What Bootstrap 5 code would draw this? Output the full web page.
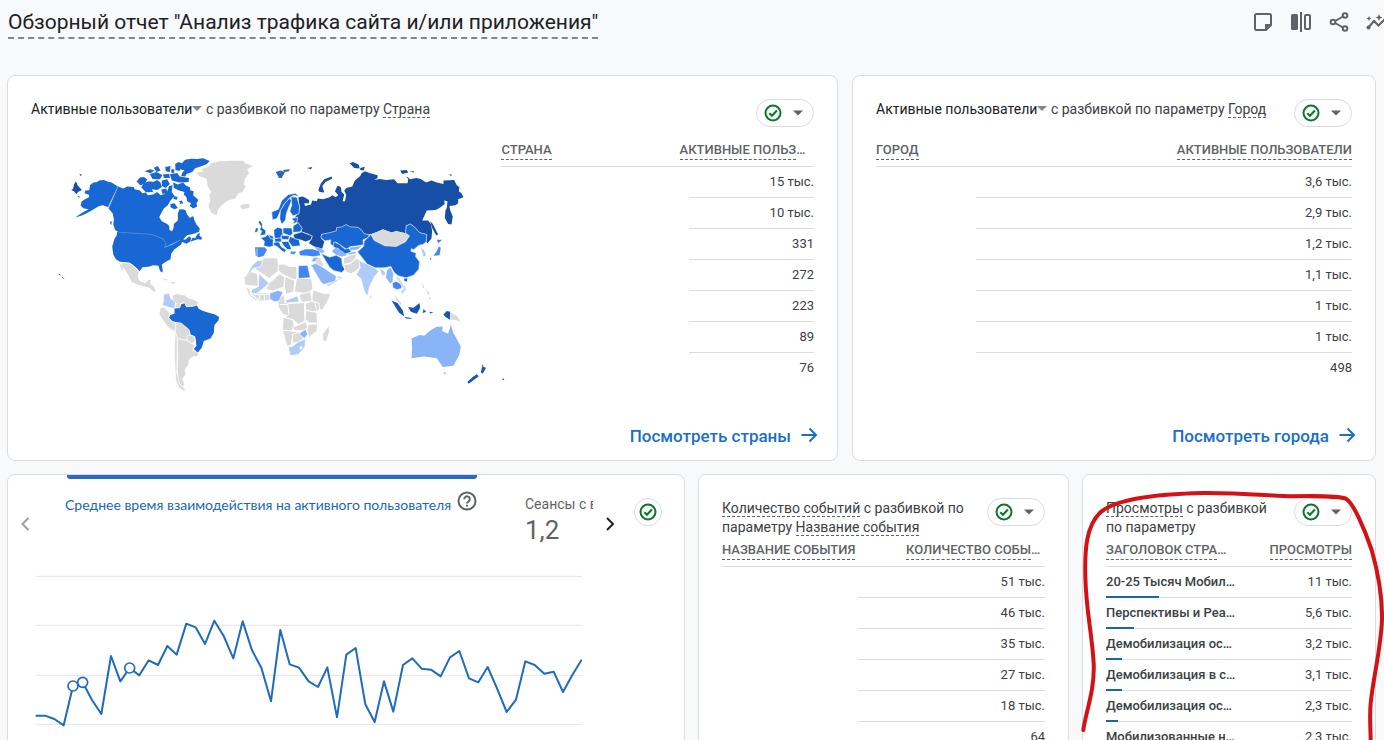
<!DOCTYPE html>
<html lang="ru">
<head>
<meta charset="utf-8">
<meta name="viewport" content="width=device-width, initial-scale=1">
<title>Обзорный отчет</title>
<link href="https://cdn.jsdelivr.net/npm/bootstrap@5.3.0/dist/css/bootstrap.min.css" rel="stylesheet">
<style>
body{background:#f8f9fb;color:#3c4043;font-family:Roboto,"Liberation Sans",sans-serif;font-size:14px;line-height:19px}
.page{padding:0 8px 14px 7px}
.report-head{height:75px;padding-top:10px}
.report-title{font-size:21px;line-height:25px;font-weight:400;color:#202124;border-bottom:2px dashed #80868b;margin-left:1px;padding-bottom:2px}
.tools{gap:14px;margin-right:-13px}
.tool{width:24px;height:24px;padding:0;border:0;background:none;color:#5f6368}
.grid-top,.grid-bottom{display:grid}
.grid-top{grid-template-columns:831fr 524fr;gap:14px;margin-bottom:13px}
.grid-bottom{grid-template-columns:678fr 371fr 294fr;gap:13px}
.panel{background:#fff;border:1px solid #dadce0;border-radius:8px;min-width:0}
.panel-in{padding:23px 23px 0}
.panel-head{min-height:38px;gap:12px}
.panel-title{font-size:14px;line-height:19px;font-weight:400;color:#3c4043;margin:0;padding-top:1px}
.metric{color:#202124;cursor:pointer}
.metric::after{content:"";display:inline-block;border:5px solid transparent;border-top-color:#80868b;border-bottom:0;vertical-align:3px}
.dim{border-bottom:1px dashed #5f6368}
.pill{width:58px;height:28px;border:1px solid #dadce0;border-radius:14px;background:#fff;padding:0 10px 0 6px;flex:none}
.pill svg{display:block}
.badge-round{width:28px;height:28px;border:1px solid #dadce0;border-radius:14px;background:#fff;padding:0;margin:23px 22px 0 7px}
.data{width:100%;table-layout:fixed;border-collapse:separate;border-spacing:0;font-size:13px}
.data th{line-height:16px;font-weight:500;color:#5f6368;padding:4px 0 6px;border-bottom:1px solid #dadce0;white-space:nowrap}
.data th span{display:inline-block;border-bottom:1px dashed #5f6368;padding-bottom:1px}
.panel-head + .data,.country-col .data{border-top:1px solid transparent}
.data td{height:31px;padding:0;line-height:16px;white-space:nowrap;position:relative}
.data td.val{text-align:right;border-bottom:1px solid #dadce0}
.data tr:last-child td.val{border-bottom-color:transparent}
.data td.page-name{font-weight:500;border-bottom:1px solid #dadce0}
.share{position:absolute;left:0;bottom:-1px;height:2px;background:#1967a8}
.map-col{flex:471 1 0;min-width:0}
.country-col{flex:313 1 0;min-width:0}
.panel-foot{padding:0 18px 12px;text-align:right}
.more{display:inline-flex;align-items:center;gap:8px;font-size:17px;line-height:24px;font-weight:500;color:#1a6fc9;text-decoration:none}
.tabs-row{height:96px}
.arrow{border:0;background:none;padding:0;width:34px}
.tabs-view{flex:1;min-width:0;overflow:hidden;margin-left:23px}
.tab{border:0;background:none;padding:20px 0 0;text-align:left;white-space:nowrap;color:#5f6368;line-height:19px;flex:none}
.tab.on{color:#1a67b8;width:412px;position:relative;margin-right:48px;padding-top:16px}
.tab.on::before{content:"";position:absolute;left:2px;right:0;top:0;height:4px;background:#2a6bbf;border-radius:0 0 3px 3px}
.tab-name{font-family:Lato,Roboto,sans-serif;padding-top:4px}
.tab-num{font-size:26px;line-height:32px}
.trend{padding:0 102px 0 27px}
.pen{position:absolute;left:-13px;top:-5px;pointer-events:none}
</style>
</head>
<body>
<svg width="0" height="0" class="position-absolute" aria-hidden="true">
<defs>
<symbol id="ok" viewBox="0 0 20 20"><circle cx="10" cy="10" r="7.5" fill="#f1faf3" stroke="#137333" stroke-width="2"/><path d="M6.3 10.2l2.6 2.6 5-5.3" fill="none" stroke="#137333" stroke-width="2"/></symbol>
<symbol id="down" viewBox="0 0 10 6"><path d="M0 .5h10l-5 5z" fill="#5f6368"/></symbol>
<symbol id="go" viewBox="0 0 20 20"><path d="M2.500 9h14M10.500 2.500L17 9l-6.500 6.500" fill="none" stroke="#1a6fc9" stroke-width="2"/></symbol>
</defs>
</svg>
<div class="page vh-100 overflow-hidden">
<header class="report-head d-flex justify-content-between align-items-start">
<h1 class="report-title mb-0">Обзорный отчет "Анализ трафика сайта и/или приложения"</h1>
<div class="tools d-flex flex-shrink-0">
<button class="tool" aria-label="Заметка"><svg width="24" height="24" viewBox="0 0 24 24" fill="none" stroke="currentColor" stroke-width="2"><path d="M15 20H5.500A1.500 1.500 0 0 1 4 18.500V5.500A1.500 1.500 0 0 1 5.500 4h13A1.500 1.500 0 0 1 20 5.500V15z"/><path d="M14 20v-6h6z" fill="currentColor" stroke="none"/></svg></button>
<button class="tool" aria-label="Сравнить"><svg width="24" height="24" viewBox="0 0 24 24"><rect x="2" y="4" width="7" height="16" rx="1.500" fill="currentColor"/><path d="M12 2v20" stroke="currentColor" stroke-width="2"/><rect x="16" y="5" width="5" height="14" rx="1" fill="none" stroke="currentColor" stroke-width="2"/></svg></button>
<button class="tool" aria-label="Поделиться"><svg width="24" height="24" viewBox="0 0 24 24" fill="none" stroke="currentColor" stroke-width="2"><path d="M8 11l9-5M8 13l9 5"/><circle cx="6" cy="12" r="2.300"/><circle cx="18" cy="5.500" r="2.300"/><circle cx="18" cy="18.500" r="2.300"/></svg></button>
<button class="tool" aria-label="Статистика"><svg width="24" height="24" viewBox="0 0 24 24"><path d="M3 18l6-7 4.500 4.500L22 7" fill="none" stroke="currentColor" stroke-width="2"/><circle cx="3.500" cy="17.500" r="2" fill="currentColor"/><circle cx="9" cy="11.500" r="1.500" fill="currentColor"/><path d="M14 4l1 2.500 2.500 1-2.500 1-1 2.500-1-2.500-2.500-1 2.500-1zM4 6l.8 1.700 1.700.8-1.700.8L4 11l-.8-1.700-1.700-.8 1.700-.8z" fill="currentColor"/></svg></button>
</div>
</header>

<div class="grid-top">
<section class="panel d-flex flex-column">
<div class="panel-in position-relative">
<div class="panel-head d-flex justify-content-between align-items-start">
<h2 class="panel-title"><span class="metric">Активные пользователи</span> с разбивкой по параметру <span class="dim">Страна</span></h2>
<button class="pill d-flex align-items-center justify-content-between" aria-label="Качество данных"><svg width="20" height="20"><use href="#ok"/></svg><svg width="10" height="6"><use href="#down"/></svg></button>
</div>
<div class="d-flex align-items-start">
<div class="map-col">
<svg class="w-100 d-block" viewBox="31 137 471 262" role="img" aria-label="Карта мира">
<g transform="translate(40 140) scale(.33333)" stroke-linejoin="round">
<g fill="#1967d2">
<path d="M150 136L160 128L170 127L178 122L192 120L202 125L215 128L234 140L204 202L190 196L178 198L165 206L150 215L128 226L105 233L128 218L146 208L130 205L122 197L125 185L135 178L147 172L148 165L134 160L136 152L148 151Z"/>
<path d="M235 140L250 146L262 140L282 141L284 148L300 152L308 160L318 158L324 166L340 164L352 156L362 166L374 162L382 154L388 138L398 136L396 156L404 168L392 182L384 196L372 206L366 216L358 232L366 244L382 252L388 258L389 270L396 274L401 266L402 252L414 242L414 222L418 209L430 208L438 212L441 222L450 234L460 228L464 242L470 254L480 266L478 276L462 282L442 286L430 298L436 300L448 290L454 294L452 304L440 312L431 308L418 302L372 324L378 312L370 298L352 290L330 284L238 278L226 270L220 254L222 238L218 220L206 206Z"/>
<path d="M232 276L330 283L352 289L370 298L379 310L374 323L398 314L416 303L428 302L424 314L404 328L394 342L392 358L378 366L366 374L369 394L365 398L360 392L356 378L340 376L326 381L308 382L299 394L292 386L278 374L268 368L240 366L228 358L220 344L217 320L224 296L230 288Z"/>
<path d="M452 306L458 294L466 295L472 284L480 278L479 288L487 294L484 300L474 298L462 302Z"/>
<path d="M406 72L416 66L426 70L436 59L454 56L472 57L490 55L510 63L500 73L480 80L466 85L457 96L440 102L436 110L424 108L428 98L434 92L422 88L418 93L407 90Z"/>
<path d="M400 128L414 134L430 128L438 137L450 142L452 152L462 154L460 166L476 180L470 190L472 200L460 206L450 198L454 190L442 184L440 172L432 164L434 156L418 152L402 144Z"/>
<path d="M304 142L312 130L328 124L340 126L352 120L362 128L366 142L352 150L336 148L340 156L318 157Z"/>
<path d="M290 125L300 113L312 111L322 118L316 130L302 137Z"/>
<path d="M366 122L382 118L390 132L378 144L366 138ZM390 103L412 99L420 110L448 114L446 126L420 128L396 122ZM330 102L350 96L368 106L360 118L338 117ZM314 94L330 88L344 92L332 100ZM342 83L354 78L362 92L350 96ZM376 81L392 78L390 96L378 94ZM394 89L404 88L402 100L394 98ZM370 103L388 102L390 114L372 114ZM364 149L380 146L382 159L368 162ZM392 192L404 190L414 204L404 208L392 202ZM210 246L216 244L214 256ZM418 184L426 182L430 190L422 192ZM404 168L414 172L410 180L400 176Z"/>
<path d="M404 506L420 504L424 494L434 490L440 502L462 498L470 494L476 506L486 512L504 518L526 524L538 532L536 542L524 556L522 580L512 596L492 604L486 624L474 638L462 628L470 618L468 602L466 590L452 584L448 572L436 562L416 550L396 544L387 534L392 526L404 522Z"/>
</g>
<path d="M234 140L204 202" stroke="#5f92e0" stroke-width="2"/>
<path d="M236 277L330 283L352 289L370 298L379 310L374 323L418 303" fill="none" stroke="#5f92e0" stroke-width="2"/>
<path d="M94 150L100 146L102 134L108 124L113 136L118 142L126 150L114 156L109 163L103 155ZM118 103l7 0-2 6zM112 168l7 2-1 4z" fill="#174ea6"/>
<g fill="#dadada">
<path d="M470 98L492 94L484 88L506 80L514 70L540 64L572 62L610 62L616 70L640 78L622 88L628 100L616 116L612 132L618 140L608 156L596 160L586 176L564 182L548 194L536 206L530 226L514 218L506 198L512 180L508 166L514 156L504 138L500 116L478 108Z"/>
<path d="M600 198L612 192L630 194L628 204L608 208Z"/>
<path d="M236 366L246 392L250 393L244 370L266 370L284 382L296 396L294 412L300 424L316 430L326 420L334 422L330 432L342 440L348 456L340 454L328 444L314 440L292 434L274 424L268 410L258 394Z"/>
<path d="M398 466L412 462L434 466L444 474L464 480L476 488L472 496L458 500L440 500L434 488L422 492L420 504L404 504L410 490L398 482Z" stroke="#fff" stroke-width="2"/>
<path d="M362 502L374 504L390 520L386 534L398 546L406 548L410 570L402 574L384 562L368 540L358 524Z" stroke="#fff" stroke-width="2"/>
<path d="M408 548L424 550L448 570L452 588L444 592L438 602L412 596L406 574Z" stroke="#fff" stroke-width="2"/>
<path d="M444 586L460 588L468 604L456 612L440 600Z" stroke="#fff" stroke-width="2"/>
<path d="M412 596L440 602L460 614L466 616L460 630L464 648L448 660L446 676L436 688L438 704L428 718L434 734L430 742L416 728L412 690L414 650Z" stroke="#fff" stroke-width="2"/>
<path d="M406 576L412 594L412 650L411 700L420 734L436 748L434 756L418 744L408 722L406 690L404 640Z" stroke="#fff" stroke-width="2"/>
<path d="M462 632L476 642L470 650L458 648Z"/>
<path d="M362 414L384 420L378 422ZM394 426L406 428L404 432L394 430Z"/>
</g>
<path d="M372 464L388 460L392 476L406 486L404 506L386 502L368 496L372 482Z" fill="#aecbfa" stroke="#fff" stroke-width="1"/>
<path d="M56 403L62 406M66 411L72 417" stroke="#5f6b80" stroke-width="3"/>
</g>
<g transform="translate(230 140) scale(.33333)" stroke-linejoin="round">
<g fill="#174ea6">
<path d="M206 172L220 170L238 180L238 190L224 190L226 198L244 194L248 182L262 184L264 176L280 178L300 172L308 166L318 172L326 166L316 154L324 137L334 142L336 156L344 164L339 184L346 184L350 166L344 152L350 144L368 140L376 122L392 108L396 100L406 94L422 100L444 106L444 114L434 120L450 117L470 120L494 118L504 130L534 130L536 118L530 108L542 118L560 114L574 117L590 128L606 122L622 128L642 132L642 122L674 120L682 136L690 142L688 154L696 160L702 172L686 178L686 190L678 196L660 198L662 210L670 230L666 254L656 252L646 234L648 212L652 204L654 184L644 182L646 192L630 204L618 210L592 212L578 242L596 242L604 252L608 272L606 296L594 310L590 306L592 284L570 278L556 262L545 253L530 256L528 280L500 273L486 278L460 268L444 276L420 284L404 282L396 270L384 262L360 262L350 254L336 262L322 264L320 274L298 280L276 283L274 295L284 305L278 326L254 320L238 310L248 292L236 282L216 276L214 264L202 252L202 240L196 232L204 222L210 206Z"/>
<path d="M266 150L274 130L284 118L306 110L308 116L288 126L278 138L284 158L270 156ZM360 70L370 66L388 74L390 86L374 84ZM392 84L406 80L402 92L392 90ZM512 92L532 90L536 98L518 102ZM540 94L554 94L552 98ZM232 84L248 81L244 88ZM602 244L610 252L626 284L620 286L608 264ZM658 104l8 0 0 5z"/>
</g>
<g stroke="#cfe0fb" stroke-width="2" fill="#1967d2">
<path d="M276 283L298 279L320 273L321 263L336 261L350 254L362 261L384 262L396 270L404 282L420 284L414 294L400 300L402 314L386 318L366 320L350 328L336 318L318 306L314 320L302 312L304 300L286 303L274 294Z"/>
<path d="M404 304L424 284L434 302L466 318L500 320L528 306L540 288L528 280L530 258L542 252L556 262L570 278L592 284L590 306L580 314L568 316L552 330L546 326L544 334L560 340L558 350L570 366L568 388L552 406L530 414L506 408L494 398L484 380L464 384L436 384L414 374L398 354L384 336L402 320Z"/>
<path d="M276 342L286 346L300 352L320 346L336 356L338 376L346 388L336 398L312 392L300 382L290 366Z"/>
<path d="M312 306L330 314L346 328L356 326L368 332L358 340L344 342L326 326L312 322Z"/>
</g>
<path d="M524 416l10 0-3 10-7-3z" fill="#1967d2"/>
<path d="M424 284L444 276L460 269L486 278L500 274L528 280L540 290L526 304L500 320L466 317L436 302Z" fill="#dadada"/>
<g stroke="#fff" stroke-width="2" fill="#1967d2">
<path d="M126 216L146 208L156 182L176 164L198 160L208 170L192 166L178 176L162 196L152 214L142 236L128 240Z"/>
<path d="M150 236L152 212L164 192L180 174L186 182L176 206L170 222L168 240L156 254Z"/>
<path d="M184 170L202 172L210 200L208 222L190 228L180 214L186 196Z"/>
<path d="M90 240L98 252L98 264L108 272L108 284L90 288L96 274L90 268L94 260L86 248ZM78 264L86 264L84 276L74 278Z"/>
<path d="M92 294L108 290L114 284L132 294L130 312L132 318L118 322L102 318L104 304Z"/>
<path d="M132 270L144 262L158 266L160 286L148 298L134 294Z"/>
<path d="M160 264L186 264L190 280L182 288L160 280Z"/>
<path d="M190 258L206 248L218 266L212 276L190 278Z"/>
<path d="M184 236L204 232L202 248L186 252L194 244Z"/>
<path d="M116 284L132 290L130 298L122 296ZM134 296L154 294L156 306L136 308ZM154 286L180 288L176 300L156 298ZM180 290L208 298L212 318L188 320L176 304Z"/>
<path d="M132 308L148 306L154 320L170 330L166 338L158 334L142 320L132 316ZM154 306L176 304L186 328L174 330L162 318Z"/>
</g>
<path d="M190 284L216 276L248 288L244 300L228 306L218 302L210 300L194 296Z" fill="#174ea6" stroke="#fff" stroke-width="2"/>
<path d="M138 96L152 92L166 96L156 114L148 114ZM160 90l20-2-2 6-14 2z" fill="#2f67c0"/>
<path d="M76 322L104 322L112 330L102 348L88 352L78 348Z" fill="#4285f4"/>
<path d="M82 326v24" stroke="#fff" stroke-width="2"/>
<path d="M184 334L200 336L194 344L182 342Z" fill="#5a92ee"/>
<path d="M208 336L226 328L250 328L268 334L272 346L252 350L236 348L212 346Z" fill="#4285f4"/>
<path d="M254 320L276 326L286 336L276 340L264 332Z" fill="#8ab4f8"/>
<path d="M306 334L318 324L340 334L352 346L336 350L318 344Z" fill="#8ab4f8"/>
<path d="M358 322L398 318L384 330L362 332ZM354 340L378 334L380 344L358 346Z" fill="#8ab4f8" stroke="#fff" stroke-width="2"/>
<g fill="#dadada" stroke="#fff" stroke-width="3">
<path d="M342 354L366 344L384 342L376 358L362 370L342 374Z"/>
<path d="M342 374L362 372L380 356L394 360L390 384L376 396L364 402L348 396Z"/>
<path d="M252 352L270 352L284 376L276 382L258 370Z"/>
<path d="M288 434L326 416L334 420L318 428L296 442ZM320 408L338 410L334 424L322 420Z"/>
<path d="M84 364L104 354L144 354L148 392L118 416L76 388Z"/>
<path d="M146 374L162 372L180 380L202 380L202 420L192 420L156 402L146 392Z"/>
<path d="M42 412L60 394L84 402L86 440L46 436Z"/>
<path d="M118 430L150 402L166 412L162 442L128 454L108 448Z"/>
<path d="M166 410L196 422L192 456L168 464L164 440Z"/>
<path d="M200 416L246 416L250 448L230 462L194 456Z"/>
<path d="M250 450L286 462L304 460L296 482L278 512L268 508L246 480Z"/>
<path d="M208 464L242 456L248 484L216 488Z"/>
<path d="M48 442L60 446L62 460L86 480L78 484L56 464ZM60 462L90 458L118 460L122 482L90 484Z"/>
<path d="M144 478L164 464L166 488L210 488L208 506L176 530L160 524L146 502Z"/>
<path d="M174 492L224 488L226 544L206 554L190 540L164 536L178 522Z"/>
<path d="M226 492L246 484L268 490L270 512L244 516L228 510Z"/>
<path d="M228 512L262 518L264 550L240 550L226 538Z"/>
<path d="M160 532L190 540L194 560L186 574L158 572Z"/>
<path d="M190 562L228 546L236 566L214 574L192 574Z"/>
<path d="M236 554L264 552L262 574L238 594L232 570Z"/>
<path d="M158 572L212 576L188 596L184 618L172 620Z"/>
<path d="M188 584L208 578L224 594L206 608L188 610Z"/>
<path d="M298 556L300 576L290 606L280 604L278 584Z"/>
</g>
<path d="M74 464h46M90 464v16M104 464v16M150 494h22M256 486l4 22M160 572h52" stroke="#fff" stroke-width="3"/>
<g fill="#8ab4f8" stroke="#fff" stroke-width="2">
<path d="M206 378L234 376L242 414L206 416Z" fill="#4285f4"/>
<path d="M244 376L258 370L280 382L306 400L320 408L318 424L282 434L272 424L258 400Z"/>
<path d="M252 352L268 352L256 366L244 366Z"/>
<path d="M120 460L144 452L160 456L148 484L134 486L120 478Z"/>
<path d="M388 362L414 374L436 384L448 396L436 408L420 440L414 470L404 454L394 416L380 404L392 384Z" fill="#aecbfa"/>
<path d="M48 410L68 376L84 362L100 362L92 380L70 386L56 404Z" fill="#aecbfa"/>
<path d="M66 450L86 440L88 402L118 430L100 446L80 462L64 460Z" fill="#aecbfa"/>
<path d="M168 482L204 468L208 486L168 490Z" fill="#aecbfa"/>
<path d="M176 622L188 620L206 606L228 598L226 622L206 644L182 648Z" fill="#aecbfa"/>
<path d="M208 582L228 568L234 584L224 596Z"/>
<path d="M450 388L462 390L470 404L458 408Z" fill="#aecbfa"/>
<path d="M472 390L484 382L492 402L490 426L482 432L468 414Z"/>
<path d="M488 430L500 424L518 434L516 446L502 450L490 444Z" fill="#4285f4"/>
<path d="M498 412L506 410L524 436L532 448L520 464L512 456L522 446Z" fill="#c9dafa"/>
<path d="M546 596L570 586L584 588L600 574L620 562L640 560L638 574L656 582L664 556L672 580L694 620L690 644L672 678L640 682L622 656L584 650L546 656L548 626Z" stroke="none"/>
<path d="M640 698L652 697L646 706Z"/>
<path d="M612 348L622 334L628 320L634 324L630 346ZM622 300L638 300L626 310ZM600 354L606 356L604 362Z" fill="#4285f4" stroke="none"/>
<path d="M574 322L584 332L590 346L582 350L578 334Z" fill="#aecbfa" stroke="none"/>
</g>
<path d="M228 606l5 4-4 6zM208 624l6-6 6 5-6 7z" fill="#fff"/>
<path d="M486 482L504 490L520 512L524 530L508 518ZM536 502L552 504L570 490L572 504L562 522L544 516ZM524 532L540 534L550 538L530 536ZM642 524L652 514L662 516L662 540L648 532ZM582 508L590 516L580 520ZM628 508L638 512ZM600 516l12 2-10 3z" fill="#1557b8"/>
<path d="M664 518L684 530L692 546L676 540L664 540ZM496 466l8 10 12 14-3 4-12-12zM578 426l6 16-4 4zM590 448l10 14-6 4zM596 470l10 8-6 2z" fill="#dadada"/>
<path d="M714 726L730 712L742 704L748 710L734 720L718 732ZM756 690L760 672L762 682L770 684L760 702L754 698Z" fill="#1557b8"/>
<path d="M420 466l8 8-6 2z" fill="#dadada"/>
</g>
</svg>
</div>
<div class="country-col">
<table class="data">
<colgroup><col style="width:57%"><col style="width:3%"><col style="width:40%"></colgroup>
<thead><tr><th><span>СТРАНА</span></th><th colspan="2"><span>АКТИВНЫЕ ПОЛЬЗ</span>…</th></tr></thead>
<tbody>
<tr><td colspan="2"></td><td class="val">15 тыс.</td></tr>
<tr><td colspan="2"></td><td class="val">10 тыс.</td></tr>
<tr><td colspan="2"></td><td class="val">331</td></tr>
<tr><td colspan="2"></td><td class="val">272</td></tr>
<tr><td colspan="2"></td><td class="val">223</td></tr>
<tr><td colspan="2"></td><td class="val">89</td></tr>
<tr><td colspan="2" class="align-bottom">.</td><td class="val">76</td></tr>
</tbody>
</table>
</div>
</div>
</div>
<div class="panel-foot mt-auto"><a class="more" href="#">Посмотреть страны <svg width="20" height="20"><use href="#go"/></svg></a></div>
</section>

<section class="panel d-flex flex-column">
<div class="panel-in">
<div class="panel-head d-flex justify-content-between align-items-start">
<h2 class="panel-title"><span class="metric">Активные пользователи</span> с разбивкой по параметру <span class="dim">Город</span></h2>
<button class="pill d-flex align-items-center justify-content-between" aria-label="Качество данных"><svg width="20" height="20"><use href="#ok"/></svg><svg width="10" height="6"><use href="#down"/></svg></button>
</div>
<table class="data">
<colgroup><col style="width:21%"><col></colgroup>
<thead><tr><th><span>ГОРОД</span></th><th class="text-end"><span>АКТИВНЫЕ ПОЛЬЗОВАТЕЛИ</span></th></tr></thead>
<tbody>
<tr><td></td><td class="val">3,6 тыс.</td></tr>
<tr><td></td><td class="val">2,9 тыс.</td></tr>
<tr><td></td><td class="val">1,2 тыс.</td></tr>
<tr><td></td><td class="val">1,1 тыс.</td></tr>
<tr><td></td><td class="val">1 тыс.</td></tr>
<tr><td></td><td class="val">1 тыс.</td></tr>
<tr><td></td><td class="val">498</td></tr>
</tbody>
</table>
</div>
<div class="panel-foot mt-auto pt-4"><a class="more mt-3" href="#">Посмотреть города <svg width="20" height="20"><use href="#go"/></svg></a></div>
</section>
</div>

<div class="grid-bottom">
<section class="panel">
<div class="tabs-row d-flex align-items-stretch">
<button class="arrow" aria-label="Назад"><svg width="10" height="16" viewBox="0 0 10 16"><path d="M8.500 2L2.500 8l6 6" fill="none" stroke="#9aa0a6" stroke-width="2"/></svg></button>
<div class="tabs-view d-flex align-items-start">
<button class="tab on d-flex align-items-start justify-content-between"><span class="tab-name">Среднее время взаимодействия на активного пользователя</span><svg class="flex-shrink-0" width="20" height="20" viewBox="0 0 20 20" fill="none" stroke="#5f6368" stroke-width="2"><circle cx="10" cy="10" r="8.500"/><path d="M7.200 8.200a2.800 2.800 0 1 1 4.300 2.300c-1 .7-1.500 1.100-1.500 2.100M10 13.700v1.800"/></svg></button>
<button class="tab">Сеансы с вовлечением<br><span class="tab-num">1,2</span></button>
</div>
<button class="arrow" aria-label="Вперед"><svg width="10" height="16" viewBox="0 0 10 16"><path d="M2 2l6 6-6 6" fill="none" stroke="#202124" stroke-width="2"/></svg></button>
<button class="badge-round d-flex align-items-center justify-content-center" aria-label="Качество данных"><svg width="20" height="20"><use href="#ok"/></svg></button>
</div>
<div class="trend">
<svg class="w-100 d-block" viewBox="105 318 1641 507" role="img" aria-label="Среднее время взаимодействия">
<path d="M107 334H1746M107 481H1746M107 631H1746M107 778H1746" stroke="#e3e5e8" stroke-width="3"/>
<g fill="none" stroke="#1f6bbd" stroke-width="6">
<path stroke-linejoin="round" d="M107 752L135 752L163 762L191 781L219 663L248 652L276 705L304 747L333 573L361 649L389 609L418 631L446 586L474 600L502 543L530 569L559 476L587 487L615 537L643 467L671 513L700 580L728 469L756 556L784 608L813 709L841 495L869 598L897 608L926 649L954 666L982 607L1011 757L1039 569L1067 549L1096 718L1124 771L1152 649L1180 740L1209 600L1237 580L1265 611L1293 614L1322 634L1350 577L1378 558L1407 640L1435 652L1463 606L1491 670L1520 741L1548 704L1576 589L1604 600L1633 626L1661 620L1689 681L1717 630L1745 584"/>
<g fill="#fff" stroke-width="5"><circle cx="219" cy="663" r="15"/><circle cx="248" cy="652" r="15"/><circle cx="389" cy="609" r="15"/></g>
</g>
</svg>
</div>
</section>

<section class="panel">
<div class="panel-in">
<div class="panel-head d-flex justify-content-between align-items-start">
<h2 class="panel-title"><span class="dim">Количество событий</span> с разбивкой по параметру <span class="dim">Название события</span></h2>
<button class="pill d-flex align-items-center justify-content-between" aria-label="Качество данных"><svg width="20" height="20"><use href="#ok"/></svg><svg width="10" height="6"><use href="#down"/></svg></button>
</div>
<table class="data">
<colgroup><col style="width:42%"><col style="width:15%"><col></colgroup>
<thead><tr><th colspan="2"><span>НАЗВАНИЕ СОБЫТИЯ</span></th><th><span>КОЛИЧЕСТВО СОБЫ</span>…</th></tr></thead>
<tbody>
<tr><td></td><td class="val" colspan="2">51 тыс.</td></tr>
<tr><td></td><td class="val" colspan="2">46 тыс.</td></tr>
<tr><td></td><td class="val" colspan="2">35 тыс.</td></tr>
<tr><td></td><td class="val" colspan="2">27 тыс.</td></tr>
<tr><td></td><td class="val" colspan="2">18 тыс.</td></tr>
<tr><td></td><td class="val" colspan="2">64</td></tr>
</tbody>
</table>
</div>
</section>

<section class="panel position-relative">
<div class="panel-in">
<div class="panel-head d-flex justify-content-between align-items-start">
<h2 class="panel-title"><span class="dim">Просмотры</span> с разбивкой по параметру</h2>
<button class="pill d-flex align-items-center justify-content-between" aria-label="Качество данных"><svg width="20" height="20"><use href="#ok"/></svg><svg width="10" height="6"><use href="#down"/></svg></button>
</div>
<table class="data">
<colgroup><col style="width:60%"><col></colgroup>
<thead><tr><th><span>ЗАГОЛОВОК СТРА</span>…</th><th class="text-end"><span>ПРОСМОТРЫ</span></th></tr></thead>
<tbody>
<tr><td class="page-name">20-25 Тысяч Мобил…<div class="share" style="width:36%"></div></td><td class="val">11 тыс.</td></tr>
<tr><td class="page-name">Перспективы и Реа…<div class="share" style="width:19%"></div></td><td class="val">5,6 тыс.</td></tr>
<tr><td class="page-name">Демобилизация ос…<div class="share" style="width:11%"></div></td><td class="val">3,2 тыс.</td></tr>
<tr><td class="page-name">Демобилизация в с…<div class="share" style="width:11%"></div></td><td class="val">3,1 тыс.</td></tr>
<tr><td class="page-name">Демобилизация ос…<div class="share" style="width:8%"></div></td><td class="val">2,3 тыс.</td></tr>
<tr><td class="page-name">Мобилизованные н…</td><td class="val">2,3 тыс.</td></tr>
</tbody>
</table>
</div>
<svg class="pen" width="314" height="270" viewBox="0 0 942 810" aria-hidden="true"><path d="M40 780C46 730 75 660 71 580C66 490 48 420 46 320C44 240 48 170 90 128C130 92 240 72 400 69C520 68 600 78 670 79C740 77 810 80 828 86C850 98 885 180 905 240C925 310 937 390 936 450C932 540 910 620 902 700C898 740 902 780 902 812" fill="none" stroke="#d31216" stroke-width="12" stroke-linecap="round"/></svg>
</section>
</div>
</div>
</body>
</html>
